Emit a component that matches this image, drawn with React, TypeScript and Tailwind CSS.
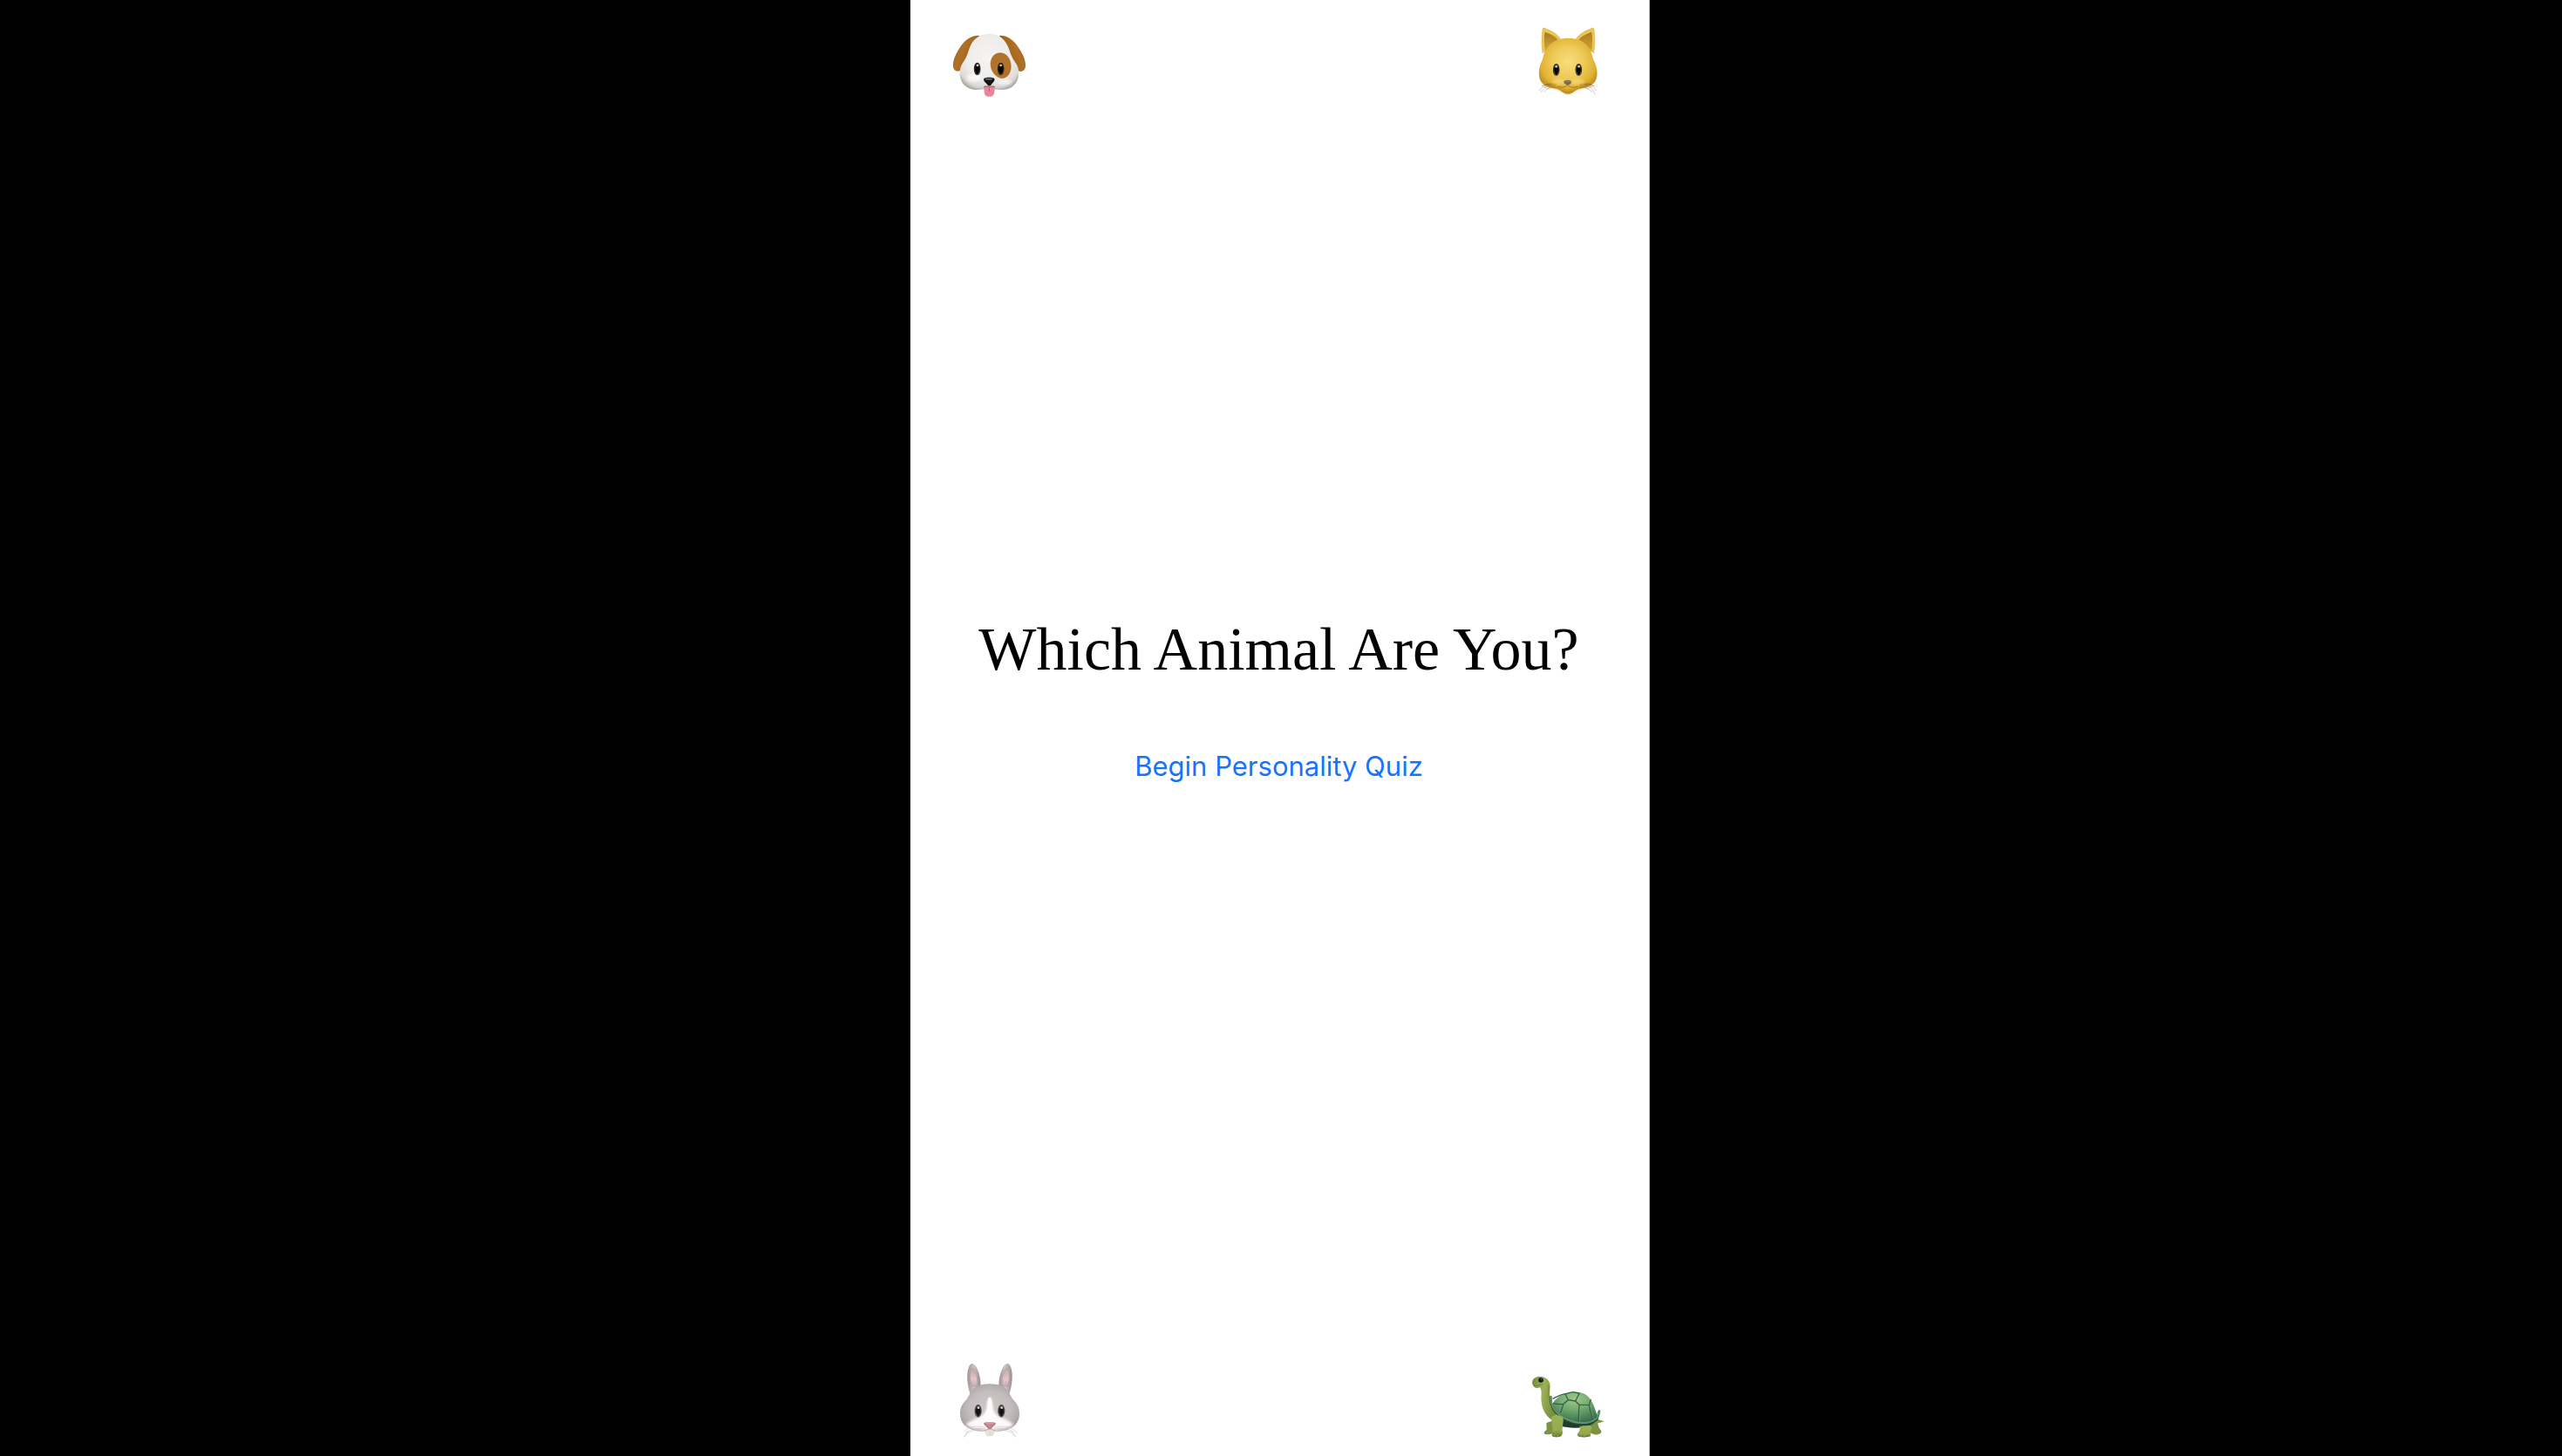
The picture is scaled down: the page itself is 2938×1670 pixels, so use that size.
function Dog() {
  return (
    <svg viewBox="30 12 270 270" className="size-[90px] overflow-visible" role="img" aria-label="Dog">
      <defs>
        <radialGradient id="dogHead" cx="0.5" cy="0.42" r="0.66">
          <stop offset="0" stopColor="#f6f5f4" />
          <stop offset="0.6" stopColor="#eeecea" />
          <stop offset="0.85" stopColor="#dcd9d7" />
          <stop offset="1" stopColor="#aaa5a0" />
        </radialGradient>
        <linearGradient id="dogEarL" x1="0" y1="0" x2="1" y2="0.5">
          <stop offset="0" stopColor="#8a5310" />
          <stop offset="0.4" stopColor="#b07127" />
          <stop offset="1" stopColor="#9a5f1a" />
        </linearGradient>
        <linearGradient id="dogEarR" x1="1" y1="0" x2="0" y2="0.5">
          <stop offset="0" stopColor="#8a5310" />
          <stop offset="0.4" stopColor="#b07127" />
          <stop offset="1" stopColor="#95590f" />
        </linearGradient>
        <filter id="dogSoft" x="-20%" y="-20%" width="140%" height="140%">
          <feGaussianBlur stdDeviation="5" />
        </filter>
        <clipPath id="dogClip">
          <path d="M163 57C197 56 217 75 229 103C236 122 240 137 251 152C262 166 267 180 264 202C260 229 239 248 211 249C194 249 181 247 163 247C145 247 134 249 116 249C87 248 66 228 63 202C60 181 65 166 75 152C86 137 89 122 97 101C108 74 130 57 163 57Z" />
        </clipPath>
      </defs>
      <path d="M130 63C110 60 83 73 66 98C49 122 37 149 39 168C40 183 53 189 64 182C78 173 85 158 89 138C94 112 112 83 130 63Z" fill="url(#dogEarL)" />
      <path d="M197 63C218 60 242 72 260 98C278 122 290 149 288 168C287 183 275 189 264 184C250 176 242 158 238 138C233 111 215 83 197 63Z" fill="url(#dogEarR)" />
      <path d="M163 57C197 56 217 75 229 103C236 122 240 137 251 152C262 166 267 180 264 202C260 229 239 248 211 249C194 249 181 247 163 247C145 247 134 249 116 249C87 248 66 228 63 202C60 181 65 166 75 152C86 137 89 122 97 101C108 74 130 57 163 57Z" fill="url(#dogHead)" />
      <g clipPath="url(#dogClip)">
        <path d="M60 205C67 238 95 251 120 250C142 248 153 243 163 243C173 243 187 249 211 250C242 247 263 228 266 202" fill="none" stroke="#999089" strokeWidth="8" opacity="0.5" filter="url(#dogSoft)" />
        <ellipse cx="110" cy="208" rx="25" ry="14" fill="#fff" opacity="0.7" filter="url(#dogSoft)" />
        <ellipse cx="216" cy="222" rx="25" ry="10" fill="#fff" opacity="0.6" filter="url(#dogSoft)" />
      </g>
      <path d="M203 122C225 124 238 144 238 168C238 190 228 207 208 209C188 209 169 187 168 163C167 140 180 121 203 122Z" fill="#b07329" />
      <path d="M203 122C225 124 238 144 238 168C238 190 228 207 208 209C188 209 169 187 168 163C167 140 180 121 203 122Z" fill="none" stroke="#8e5514" strokeWidth="2" opacity="0.6" />
      <path d="M145 240C151 236 158 240 163 239C168 240 176 236 182 240C181 254 182 262 177 268C171 274 156 274 150 268C145 262 146 253 145 240Z" fill="#e8859a" />
      <path d="M163 240V255" stroke="#c35d77" strokeWidth="3" />
      <path d="M145 239C153 235 159 239 163 237C168 239 175 235 182 239" fill="none" stroke="#8e3f4c" strokeWidth="3" />
      <path d="M163 230V238" stroke="#777" strokeWidth="2" />
      <path d="M145 211C151 205 175 205 181 211C184 218 175 225 171 230C167 236 160 236 156 230C151 225 142 219 145 211Z" fill="#141414" />
      <ellipse cx="162" cy="212" rx="12" ry="3.5" fill="#626262" />
      <ellipse cx="122" cy="177" rx="11.5" ry="22" fill="#2a2827" />
      <ellipse cx="122" cy="180" rx="8" ry="16" fill="#050505" />
      <circle cx="123" cy="165" r="4" fill="#d6d6d6" />
      <path d="M113 182Q115 194 122 196Q129 194 131 182" fill="none" stroke="#5a5654" strokeWidth="2" />
      <ellipse cx="203" cy="177" rx="11.5" ry="22" fill="#2b2118" />
      <ellipse cx="203" cy="180" rx="8" ry="16" fill="#080502" />
      <circle cx="203" cy="165" r="4" fill="#c8c8c8" />
      <path d="M194 182Q196 194 203 196Q210 194 212 182" fill="none" stroke="#5c4933" strokeWidth="2" />
    </svg>
  );
}

function Cat() {
  return (
    <svg viewBox="12 27 270 270" className="size-[90px] overflow-visible" role="img" aria-label="Cat">
      <defs>
        <radialGradient id="catHead" cx="0.5" cy="0.43" r="0.6">
          <stop offset="0" stopColor="#f8de80" />
          <stop offset="0.45" stopColor="#efcb58" />
          <stop offset="0.78" stopColor="#dfb236" />
          <stop offset="1" stopColor="#b98618" />
        </radialGradient>
        <linearGradient id="catEar" x1="0" y1="0" x2="0" y2="1">
          <stop offset="0" stopColor="#a87d22" />
          <stop offset="1" stopColor="#d3a535" />
        </linearGradient>
        <filter id="catSoft" x="-20%" y="-40%" width="140%" height="180%">
          <feGaussianBlur stdDeviation="4" />
        </filter>
      </defs>
      <path d="M60 138C56 106 57 72 61 54C63 49 68 51 73 55C91 61 111 73 121 88Z" fill="#edc751" stroke="#d3a22d" strokeWidth="1.5" />
      <path d="M236 138C240 106 240 72 236 54C234 49 229 51 224 55C206 61 186 73 175 88Z" fill="#edc751" stroke="#d3a22d" strokeWidth="1.5" />
      <path d="M69 132C65 105 64 80 68 65C82 70 102 79 112 91Z" fill="url(#catEar)" />
      <path d="M228 132C232 105 232 80 228 65C214 70 194 79 184 91Z" fill="url(#catEar)" />
      <path d="M147 86C184 85 212 101 226 131C232 147 232 155 239 169C246 184 250 204 246 222C241 246 217 256 190 260C173 262 165 277 148 278C130 278 122 263 105 260C77 256 54 246 49 222C45 203 49 184 56 168C63 154 62 146 69 130C83 101 111 86 147 86Z" fill="url(#catHead)" />
      <path d="M74 245C94 257 111 255 123 262C132 270 137 275 148 275C159 275 164 269 173 262C186 255 207 255 222 244" fill="none" stroke="#a77210" strokeWidth="6" opacity="0.55" filter="url(#catSoft)" />
      <ellipse cx="117" cy="236" rx="24" ry="10" fill="#ffe795" opacity="0.5" filter="url(#catSoft)" />
      <ellipse cx="179" cy="236" rx="24" ry="10" fill="#ffe795" opacity="0.5" filter="url(#catSoft)" />
      <path d="M112 253C127 257 142 256 146 246C150 256 166 257 181 253" fill="none" stroke="#9e701f" strokeWidth="2.5" />
      <path d="M127 260C136 267 158 267 169 260" fill="none" stroke="#cf9e2e" strokeWidth="3" />
      <path d="M133 235C138 230 154 230 159 235C160 240 155 246 148 248C141 248 132 241 133 235Z" fill="#7c6650" />
      <path d="M137 235H155" stroke="#a18a74" strokeWidth="3" />
      <g fill="none" strokeWidth="1.7">
        <path d="M107 247C94 243 83 242 68 245M105 251C91 248 82 250 66 255M108 256C95 255 84 257 74 260M187 247C200 243 211 242 226 245M189 251C203 248 212 250 228 255M186 256C199 255 210 257 220 260" stroke="#9b701d" opacity="0.75" />
        <path d="M76 247C65 251 57 257 48 267M77 253C67 258 60 264 54 273M85 257C74 262 69 267 64 273" stroke="#aaa39a" />
        <path d="M218 247C229 251 237 257 245 267M217 253C227 258 234 264 241 281M209 257C220 262 226 267 231 273" stroke="#aaa39a" />
        <path d="M91 246C80 244 69 246 58 251M204 246C215 244 226 246 237 251" stroke="#6d502a" />
      </g>
      <ellipse cx="107" cy="195" rx="11.5" ry="21" fill="#38332c" />
      <ellipse cx="107" cy="198" rx="7.5" ry="15" fill="#050505" />
      <circle cx="107" cy="184" r="4" fill="#c9c9c9" />
      <path d="M99 201Q101 212 107 214Q113 212 115 201" fill="none" stroke="#696662" strokeWidth="2" />
      <ellipse cx="184" cy="195" rx="11.5" ry="21" fill="#38332c" />
      <ellipse cx="184" cy="198" rx="7.5" ry="15" fill="#050505" />
      <circle cx="185" cy="184" r="4" fill="#c9c9c9" />
      <path d="M176 201Q178 212 184 214Q190 212 192 201" fill="none" stroke="#696662" strokeWidth="2" />
    </svg>
  );
}

function Rabbit() {
  return (
    <svg viewBox="30 27 270 270" className="size-[90px] overflow-visible" role="img" aria-label="Rabbit">
      <defs>
        <radialGradient id="rabHead" cx="0.5" cy="0.5" r="0.58">
          <stop offset="0" stopColor="#cfc8c9" />
          <stop offset="0.6" stopColor="#c4bdbe" />
          <stop offset="0.85" stopColor="#b2aaab" />
          <stop offset="1" stopColor="#918889" />
        </radialGradient>
        <linearGradient id="rabEar" x1="0" y1="0" x2="1" y2="0">
          <stop offset="0" stopColor="#9d9594" />
          <stop offset="0.5" stopColor="#cbc4c2" />
          <stop offset="1" stopColor="#958d8c" />
        </linearGradient>
        <linearGradient id="rabInner" x1="0" y1="0" x2="0" y2="1">
          <stop offset="0" stopColor="#c0a5a8" />
          <stop offset="0.6" stopColor="#e3c4ca" />
          <stop offset="1" stopColor="#caaeb3" />
        </linearGradient>
        <filter id="rabSoft" x="-20%" y="-20%" width="140%" height="140%">
          <feGaussianBlur stdDeviation="4" />
        </filter>
        <clipPath id="rabClip">
          <path d="M165 109C195 109 218 118 230 137C236 145 238 152 244 161C255 172 268 186 267 212C267 240 248 262 215 269C194 273 181 272 175 276C170 280 160 280 155 276C149 272 136 273 115 269C82 262 63 240 63 212C62 186 75 172 86 161C92 152 94 145 100 137C112 118 135 109 165 109Z" />
        </clipPath>
      </defs>
      <path d="M98 144C88 113 84 78 92 53C97 36 108 34 117 48C130 69 136 99 133 124Z" fill="url(#rabEar)" />
      <path d="M232 144C242 113 246 78 238 53C233 36 222 34 213 48C200 69 194 99 197 124Z" fill="url(#rabEar)" />
      <path d="M105 117C97 101 95 77 100 60C104 53 109 53 113 62C121 79 124 98 122 114Z" fill="url(#rabInner)" stroke="#a49596" strokeWidth="1.5" />
      <path d="M225 117C233 101 235 77 230 60C226 53 221 53 217 62C209 79 206 98 208 114Z" fill="url(#rabInner)" stroke="#a49596" strokeWidth="1.5" />
      <path d="M165 109C195 109 218 118 230 137C236 145 238 152 244 161C255 172 268 186 267 212C267 240 248 262 215 269C194 273 181 272 175 276C170 280 160 280 155 276C149 272 136 273 115 269C82 262 63 240 63 212C62 186 75 172 86 161C92 152 94 145 100 137C112 118 135 109 165 109Z" fill="url(#rabHead)" />
      <g clipPath="url(#rabClip)">
        <path d="M165 157C172 157 173 170 175 187C177 207 187 218 206 226C227 232 240 244 249 250C233 262 214 270 165 274C116 270 97 262 81 250C90 244 103 232 124 226C143 218 153 207 155 187C157 170 158 157 165 157Z" fill="#fdf8f9" filter="url(#rabSoft)" />
        <path d="M165 155C171 155 172 167 173 185C174 208 184 219 195 226H135C147 219 155 207 157 185C158 167 159 155 165 155Z" fill="#fffafb" />
        <path d="M72 246C90 264 112 270 140 268M258 246C240 264 218 270 190 268" fill="none" stroke="#afa5a6" strokeWidth="7" opacity="0.7" filter="url(#rabSoft)" />
      </g>
      <path d="M151 266C156 262 174 262 179 266C181 276 178 287 173 288H157C152 286 149 275 151 266Z" fill="#e4e4df" stroke="#c9c6c4" strokeWidth="1" />
      <path d="M165 270V286" stroke="#c2c0bd" strokeWidth="1.2" />
      <path d="M145 268C153 268 162 267 165 259C168 267 177 268 185 268" fill="none" stroke="#a48389" strokeWidth="2" />
      <path d="M145 244C149 239 159 241 165 241C172 241 181 239 185 244C187 250 174 256 171 262C168 266 162 266 159 262C155 255 143 250 145 244Z" fill="#c78492" />
      <path d="M153 244C159 246 171 246 177 244" fill="none" stroke="#dca8b1" strokeWidth="3" />
      <path d="M146 244C149 252 156 255 160 261C163 265 167 265 170 261C174 255 182 252 184 244" fill="none" stroke="#9c6370" strokeWidth="2" />
      <path d="M151 260C132 253 107 254 86 262M150 264C126 259 100 263 82 279M147 268C115 263 91 273 76 292M179 260C198 253 223 254 244 262M180 264C204 259 230 263 246 275M183 268C215 263 239 273 255 292" fill="none" stroke="#bfb4b5" strokeWidth="1.8" opacity="0.8" />
      <path d="M89 263Q81 269 76 275M92 270Q83 280 76 292M241 263Q251 269 259 280M238 270Q249 280 255 292" fill="none" stroke="#aaa" strokeWidth="1.3" />
      <ellipse cx="125" cy="202" rx="12" ry="22" fill="#444342" />
      <ellipse cx="125" cy="205" rx="8" ry="16" fill="#111" />
      <circle cx="126" cy="191" r="4" fill="#d6d6d6" />
      <path d="M117 210Q120 220 125 222Q131 220 133 210" fill="none" stroke="#81817f" strokeWidth="2" />
      <ellipse cx="205" cy="202" rx="12" ry="22" fill="#444342" />
      <ellipse cx="205" cy="205" rx="8" ry="16" fill="#111" />
      <circle cx="206" cy="191" r="4" fill="#d6d6d6" />
      <path d="M197 210Q200 220 205 222Q211 220 213 210" fill="none" stroke="#81817f" strokeWidth="2" />
    </svg>
  );
}

function Turtle() {
  return (
    <svg viewBox="27 -3 270 270" className="size-[90px] overflow-visible" role="img" aria-label="Turtle">
      <defs>
        <linearGradient id="turSkin" x1="0" y1="0" x2="1" y2="0.3">
          <stop offset="0" stopColor="#758f38" />
          <stop offset="0.5" stopColor="#9cb156" />
          <stop offset="1" stopColor="#779039" />
        </linearGradient>
        <linearGradient id="turLeg" x1="0" y1="0" x2="0" y2="1">
          <stop offset="0" stopColor="#9bb352" />
          <stop offset="0.7" stopColor="#94a94f" />
          <stop offset="1" stopColor="#66792d" />
        </linearGradient>
        <radialGradient id="turShell" cx="0.5" cy="0.22" r="0.75">
          <stop offset="0" stopColor="#a0c98c" />
          <stop offset="0.45" stopColor="#73aa70" />
          <stop offset="1" stopColor="#376d4c" />
        </radialGradient>
      </defs>
      <path d="M257 199L287 208L271 213L250 211Z" fill="#7d973b" />
      <path d="M88 213L113 205L115 241C112 251 101 254 83 252C76 248 83 240 89 237Z" fill="#7b9441" />
      <path d="M236 218L266 207C264 220 267 230 276 239C281 249 270 254 252 253L236 246Z" fill="#7b9441" />
      <path d="M108 192L265 199C252 221 223 229 195 230C163 230 130 226 109 212Z" fill="#203c2e" />
      <path d="M66 91C55 97 44 91 40 80C37 68 43 58 56 55C74 50 93 59 99 76C104 91 97 107 100 121C103 142 113 157 120 174L123 198L105 202C83 186 73 163 71 140C68 119 75 104 66 91Z" fill="url(#turSkin)" />
      <path d="M96 84C98 105 94 116 98 132C101 150 109 164 117 178" fill="none" stroke="#667d2c" strokeWidth="4" opacity="0.45" />
      <path d="M42 83C52 88 64 83 76 80" fill="none" stroke="#6c8031" strokeWidth="2.5" />
      <path d="M44 70L47 71" stroke="#5d7128" strokeWidth="2" />
      <ellipse cx="69" cy="66" rx="8.5" ry="8" fill="#121510" />
      <circle cx="71" cy="63" r="2" fill="#777" />
      <path d="M106 157C113 126 149 108 190 107C228 106 247 133 258 174L265 193C251 209 227 216 196 216C158 215 124 199 106 157Z" fill="url(#turShell)" />
      <g fill="none" stroke="#356046" strokeWidth="4" strokeLinejoin="round">
        <path d="M110 130C126 122 139 115 153 113L163 134L147 148L137 179M163 134L188 138L201 151L198 214M188 138L202 111M201 151L235 151L248 208M235 151L241 132M147 148C134 151 122 148 111 145" />
        <path d="M153 113L179 107L202 111" />
      </g>
      <g fill="none" stroke="#9ac488" strokeWidth="1.3" opacity="0.7">
        <path d="M157 113L167 131M192 138L205 112M205 148L234 148M204 155L202 209M151 149L141 181M238 151L251 202" />
      </g>
      <path d="M103 124C101 157 121 185 149 200C191 222 236 224 262 200L270 173" fill="none" stroke="#254b37" strokeWidth="8" strokeLinecap="round" />
      <path d="M103 123C101 155 121 182 150 197C191 218 236 220 262 197L270 173" fill="none" stroke="#639871" strokeWidth="5.5" strokeLinecap="round" />
      <path d="M105 197C106 184 137 183 145 195C149 208 142 222 143 240C147 255 137 262 121 262C104 262 106 253 108 243C112 227 104 210 105 197Z" fill="url(#turLeg)" />
      <path d="M203 225C215 222 237 221 244 227C244 237 237 240 241 249C244 260 229 262 214 262C198 262 192 257 195 250C203 242 204 234 203 225Z" fill="url(#turLeg)" />
      <path d="M109 257Q124 264 141 257M197 258Q216 264 240 258" fill="none" stroke="#596b27" strokeWidth="2" />
      <path d="M115 254L117 259M126 255L127 260M207 255L208 260M219 255L219 260" stroke="#c0c985" strokeWidth="2" />
    </svg>
  );
}

export default function App() {
  return (
    <div className="grid min-h-screen grid-cols-[1044fr_848fr_1046fr] bg-black">
      <main className="col-start-2 flex flex-col justify-between border-r border-[#b5b5b5] bg-white pt-6 pr-12 pb-5 pl-[46px]">
        <div className="flex justify-between">
          <Dog />
          <Cat />
        </div>
        <div className="flex flex-col items-center gap-[72px] pb-[72px] whitespace-nowrap">
          <h1 className="font-['Liberation_Serif',serif] text-[70px] leading-[84px] text-black">
            Which Animal Are You?
          </h1>
          <button type="button" className="font-['Inter',sans-serif] text-[31px] leading-10 text-[#1673ff]">
            Begin Personality Quiz
          </button>
        </div>
        <div className="flex justify-between">
          <Rabbit />
          <Turtle />
        </div>
      </main>
    </div>
  );
}
